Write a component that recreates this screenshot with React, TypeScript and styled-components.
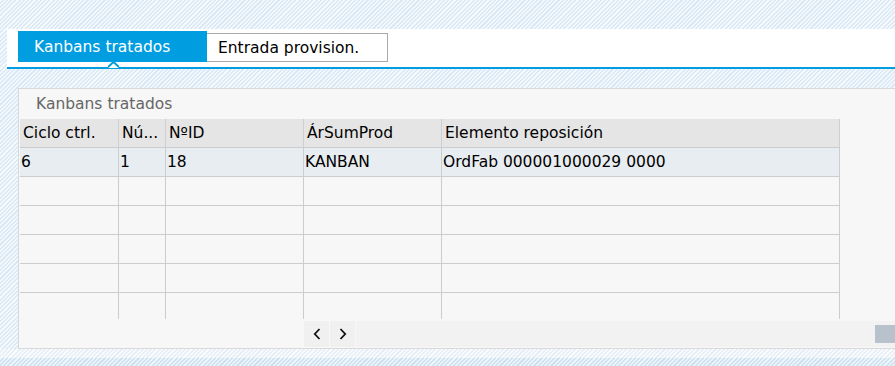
import React from 'react'
import styled, { createGlobalStyle } from 'styled-components'

const hatch = (stripe: string, base: string) => `repeating-linear-gradient(
  135deg,
  ${base} 0px,
  ${base} 1.5px,
  ${stripe} 1.5px,
  ${stripe} 3px
)`

const GlobalStyle = createGlobalStyle`
  html, body {
    margin: 0;
    padding: 0;
    height: 100%;
  }
  body {
    background: ${hatch('#d9e9f5', '#f6f9fc')};
    font-family: "DejaVu Sans", Verdana, sans-serif;
    font-size: 15.5px;
    overflow: hidden;
  }
`

const columns = [
  { title: 'Ciclo ctrl.', width: 99 },
  { title: 'Nú...', width: 47 },
  { title: 'NºID', width: 138 },
  { title: 'ÁrSumProd', width: 138 },
  { title: 'Elemento reposición', width: 398 },
]

const rows = [['6', '1', '18', 'KANBAN', 'OrdFab 000001000029 0000']]
const emptyRows = 5

const App: React.FC = () => {
  const gridCols = columns.map((c) => `${c.width}px`).join(' ')
  return (
    <>
      <GlobalStyle />
      <Page>
        <TabBar>
          <Tab $active>Kanbans tratados</Tab>
          <Tab>Entrada provision.</Tab>
          <Notch width="11" height="6" viewBox="0 0 11 6">
            <polygon points="0,6 5.5,0.8 11,6" fill="#ffffff" />
            <polyline points="0,5 5.5,0 11,5" fill="none" stroke="#009de0" strokeWidth="2" />
          </Notch>
        </TabBar>
        <Panel>
          <PanelTitle>Kanbans tratados</PanelTitle>
          <TableWrap>
            <Row $cols={gridCols} $kind="head">
              {columns.map((c) => (
                <HeadCell key={c.title}>{c.title}</HeadCell>
              ))}
            </Row>
            {rows.map((r, i) => (
              <Row key={i} $cols={gridCols} $kind="data">
                {r.map((v, j) => (
                  <Cell key={j}>{v}</Cell>
                ))}
              </Row>
            ))}
            {Array.from({ length: emptyRows }).map((_, i) => (
              <Row key={'e' + i} $cols={gridCols} $kind="empty">
                {columns.map((c) => (
                  <Cell key={c.title} />
                ))}
              </Row>
            ))}
          </TableWrap>
          <ScrollRow>
            <ScrollBtn aria-label="left">
              <svg width="8" height="12" viewBox="0 0 8 12">
                <polyline points="6.5,1 1.8,6 6.5,11" fill="none" stroke="#111" strokeWidth="1.8" />
              </svg>
            </ScrollBtn>
            <ScrollBtn aria-label="right">
              <svg width="8" height="12" viewBox="0 0 8 12">
                <polyline points="1.5,1 6.2,6 1.5,11" fill="none" stroke="#111" strokeWidth="1.8" />
              </svg>
            </ScrollBtn>
            <Track>
              <Thumb />
            </Track>
          </ScrollRow>
        </Panel>
        <FooterLight />
        <FooterBar />
      </Page>
    </>
  )
}

export default App

const Page = styled.div`
  padding-top: 29px;
  height: 366px;
  box-sizing: border-box;
  display: flex;
  flex-direction: column;
`

const TabBar = styled.div`
  position: relative;
  margin-left: 7px;
  background: #ffffff;
  border-bottom: 2px solid #009de0;
  display: flex;
  align-items: flex-start;
  padding: 2px 0 0 11px;
  height: 36px;
  margin-bottom: 19px;
`

const Tab = styled.div<{ $active?: boolean }>`
  box-sizing: border-box;
  display: flex;
  align-items: center;
  white-space: nowrap;
  ${(p) =>
    p.$active
      ? `
    width: 189px;
    height: 31px;
    padding-left: 16px;
    background: #009de0;
    color: #ffffff;
  `
      : `
    width: 181px;
    height: 29px;
    margin-top: 2px;
    padding-left: 11px;
    background: #ffffff;
    color: #000000;
    border: 1px solid #a9a9a9;
    border-left: none;
  `}
`

const Notch = styled.svg`
  position: absolute;
  left: 101px;
  bottom: -1px;
  display: block;
`

const Panel = styled.div`
  margin-left: 18px;
  height: 261px;
  box-sizing: border-box;
  background: #f7f7f7;
  border: 1px solid #d9d9d9;
  border-right: none;
  display: flex;
  flex-direction: column;
`

const PanelTitle = styled.div`
  height: 30px;
  flex: none;
  padding-left: 17px;
  color: #666666;
  display: flex;
  align-items: center;
  box-sizing: border-box;
`

const TableWrap = styled.div`
  margin-left: 1px;
  height: 200px;
  flex: none;
  overflow: hidden;
`

const rowBg = {
  head: '#e5e5e5',
  data: '#e8edf1',
  empty: '#f7f7f7',
}

const Row = styled.div<{ $cols: string; $kind: 'head' | 'data' | 'empty' }>`
  display: grid;
  grid-template-columns: ${(p) => p.$cols};
  width: max-content;
  height: 29px;
  box-sizing: border-box;
  background: ${(p) => rowBg[p.$kind]};
  border-bottom: 1px solid #cccccc;
`

const HeadCell = styled.div`
  display: flex;
  align-items: center;
  padding-left: 3px;
  border-right: 1px solid #cfcfcf;
  color: #000000;
  white-space: nowrap;
  overflow: hidden;
`

const Cell = styled.div`
  display: flex;
  align-items: center;
  padding-left: 1px;
  border-right: 1px solid #cccccc;
  color: #000000;
  white-space: nowrap;
  overflow: hidden;
`

const ScrollRow = styled.div`
  margin-top: 2px;
  margin-left: 285px;
  height: 26px;
  display: flex;
  gap: 1px;
`

const ScrollBtn = styled.div`
  width: 25px;
  height: 26px;
  background: #f0f0f0;
  display: flex;
  align-items: center;
  justify-content: center;
`

const Track = styled.div`
  flex: 1;
  background: #f2f2f2;
  display: flex;
  justify-content: flex-end;
  align-items: center;
`

const Thumb = styled.div`
  width: 20px;
  height: 18px;
  background: #b8c2cd;
`

const FooterLight = styled.div`
  height: 9px;
  flex: none;
  background: ${hatch('#e6eff7', '#f9fbfd')};
`

const FooterBar = styled.div`
  flex: 1;
  background: ${hatch('#cce2f0', '#eef5fa')};
`
